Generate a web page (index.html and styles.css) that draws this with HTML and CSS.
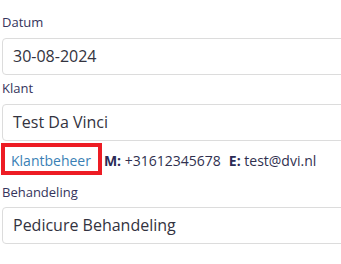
FILE: index.html
```html
<!DOCTYPE html>
<html lang="nl">
<head>
<meta charset="utf-8">
<title>Afspraak</title>
<link rel="stylesheet" href="styles.css">
</head>
<body>
<div class="form">
  <div class="group first">
    <label class="label">Datum</label>
    <div class="field">30-08-2024</div>
  </div>
  <div class="group">
    <label class="label">Klant</label>
    <div class="field">Test Da Vinci</div>
  </div>
  <div class="contact">
    <a class="manage">Klantbeheer</a>
    <span class="info"><b>M:</b> +31612345678</span>
    <span class="info email"><b>E:</b> test@dvi.nl</span>
  </div>
  <div class="group treatment">
    <label class="label">Behandeling</label>
    <div class="field">Pedicure Behandeling</div>
  </div>
</div>
</body>
</html>
```
FILE: styles.css
```css
html, body {
  margin: 0;
  padding: 0;
  background: #ffffff;
  overflow: hidden;
}
body {
  font-family: "Open Sans", "Noto Sans", sans-serif;
  color: #333345;
}
.form {
  width: 380px;
  padding: 13px 0 0 2px;
}
.group {
  display: flex;
  flex-direction: column;
  margin-top: 4px;
}
.group.first {
  margin-top: 0;
}
.group.treatment {
  margin-top: 8px;
}
.label {
  font-size: 13px;
  line-height: 18px;
  color: #34345c;
  margin-bottom: 7px;
}
.treatment .label {
  margin-bottom: 6px;
}
.field {
  box-sizing: border-box;
  height: 37px;
  border: 1px solid #dcdcdc;
  border-radius: 4px;
  padding: 0 10px;
  font-size: 16px;
  line-height: 35px;
  color: #333340;
}
.contact {
  display: flex;
  align-items: baseline;
  margin-top: 2px;
  font-size: 14px;
  color: #30304f;
}
.manage {
  box-sizing: border-box;
  height: 32px;
  margin-left: -1px;
  border: 4px solid #ed1c24;
  padding: 3px 7px 0 6px;
  line-height: 21px;
  color: #3a7fb5;
}
.info {
  margin-left: 2px;
  white-space: pre;
}
.info.email {
  margin-left: 8px;
}
.info b {
  font-weight: 700;
  color: #2b2b55;
}
```
